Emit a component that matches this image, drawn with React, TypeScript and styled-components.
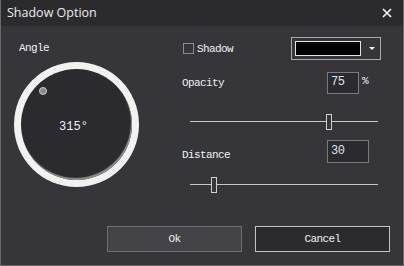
import React from 'react';
import styled, { createGlobalStyle } from 'styled-components';

const Global = createGlobalStyle`
    html, body {
        margin: 0;
        padding: 0;
        background: #36353a;
    }
    * { box-sizing: border-box; }
`

const mono = `"Liberation Mono", "DejaVu Sans Mono", monospace`

const Window = styled.div`
    width: 404px;
    height: 266px;
    border: 1px solid #6a6a6d;
    border-top: none;
    background: #36353a;
    display: flex;
    flex-direction: column;
    overflow: hidden;
`

const TitleBar = styled.div`
    height: 26px;
    background: #2b2b2e;
    display: flex;
    align-items: center;
    justify-content: space-between;
    padding: 0 11px 1px 6px;
    font-family: "Open Sans", "Noto Sans", sans-serif;
    font-size: 12.5px;
    color: #ececec;
`

const Close = styled.svg`
    width: 10px;
    height: 10px;
`

const Body = styled.div`
    flex: 1;
    display: flex;
    flex-direction: column;
    padding: 0 13px 13px 13px;
    font-family: ${mono};
    font-size: 11px;
    letter-spacing: -0.6px;
    color: #f2f2f2;
`

const Main = styled.div`
    display: flex;
    gap: 43px;
`

const AngleColumn = styled.div`
    display: flex;
    flex-direction: column;
    padding-top: 16px;
`

const Label = styled.span`
    line-height: 12px;
    padding-left: ${p => p.$indent ?? 0}px;
`

const Dial = styled.div`
    position: relative;
    margin-top: 8px;
    width: 125px;
    height: 125px;
    border-radius: 50%;
    background: #f1f1f1;
    padding: 7px;
`

const Face = styled.div`
    width: 100%;
    height: 100%;
    border-radius: 50%;
    background: #2b2a2e;
    box-shadow: inset -1px -2px 1px #909090;
    display: flex;
    align-items: center;
    justify-content: center;
    font-size: 12px;
    letter-spacing: 0;
    padding: 4px 6px 0 0;
`

const Knob = styled.div`
    position: absolute;
    width: 8px;
    height: 8px;
    margin: -4px 0 0 -4px;
    border-radius: 50%;
    background: #8a8a8a;
    border: 1px solid #c9c9c9;
`

const Options = styled.div`
    width: 199px;
    display: flex;
    flex-direction: column;
    padding-top: 11px;
`

const Row = styled.div`
    display: flex;
    align-items: center;
    height: ${p => p.$h}px;
    margin-top: ${p => p.$mt ?? 0}px;
`

const Check = styled.span`
    width: 11px;
    height: 11px;
    border: 1px solid #8c8c8c;
    margin: 0 3px 0 1px;
`

const ColorPick = styled.div`
    margin-left: auto;
    width: 90px;
    height: 23px;
    border: 1px solid #a9a9a9;
    display: flex;
    align-items: center;
    padding-left: 3px;
`

const Swatch = styled.div`
    width: 66px;
    height: 15px;
    background: #000;
    border: 1px solid #e2e2e2;
`

const Arrow = styled.div`
    margin-left: 8px;
    width: 0;
    height: 0;
    border-left: 3px solid transparent;
    border-right: 3px solid transparent;
    border-top: 3px solid #f2f2f2;
`

const FieldLabel = styled.span`
    width: 145px;
    padding-top: ${p => p.$drop ?? 0}px;
`

const Input = styled.div`
    width: ${p => p.$w}px;
    height: ${p => p.$h}px;
    border: 1px solid #7b7b7b;
    background: #2b2a2e;
    color: #dde6f7;
    font-size: 12px;
    letter-spacing: -0.4px;
    display: flex;
    align-items: center;
    padding: 0 0 2px 3px;
`

const Unit = styled.span`
    margin-left: 3px;
    align-self: flex-start;
    margin-top: 3px;
`

const Track = styled.div`
    position: relative;
    margin: 0 3px 0 8px;
    flex: 1;
    height: 16px;
    &::before {
        content: '';
        position: absolute;
        left: 0;
        right: 0;
        top: 7px;
        height: 1px;
        background: #c9c9c9;
    }
`

const Thumb = styled.div`
    position: absolute;
    top: 0;
    width: 6px;
    height: 16px;
    background: #36353a;
    border: 1px solid #cfcfcf;
`

const Footer = styled.div`
    margin-top: auto;
    display: flex;
    justify-content: flex-end;
    gap: 13px;
`

const Button = styled.div`
    width: 135px;
    height: 26px;
    display: flex;
    align-items: center;
    justify-content: center;
    background: ${p => p.$primary ? '#444448' : '#2b2a2e'};
    border: 1px solid ${p => p.$primary ? '#6f6f72' : '#c4c4c4'};
    font-size: 11px;
    padding-bottom: 1px;
`

// horizontal slider, thumb placed from value
const Slider = ({ value, max }: { value: number, max: number }) => (
    <Track>
        <Thumb style={{ left: `${value / max * 181}px` }} />
    </Track>
)

const ShadowOption = () => {
    const angle = 315
    const rad = (angle - 180) * Math.PI / 180
    const r = 48
    const c = 62.5

    return (
        <Window>
            <Global />
            <TitleBar>
                <span>Shadow Option</span>
                <Close viewBox="0 0 10 10">
                    <path d="M1 1L9 9M9 1L1 9" stroke="#f4f4f4" strokeWidth="1.7" />
                </Close>
            </TitleBar>
            <Body>
                <Main>
                    <AngleColumn>
                        <Label $indent={5}>Angle</Label>
                        <Dial>
                            <Face>{angle}°</Face>
                            <Knob style={{ left: c + r * Math.cos(rad), top: c - r * Math.sin(rad) }} />
                        </Dial>
                    </AngleColumn>
                    <Options>
                        <Row $h={23}>
                            <Check />
                            <span>Shadow</span>
                            <ColorPick>
                                <Swatch />
                                <Arrow />
                            </ColorPick>
                        </Row>
                        <Row $h={22} $mt={12}>
                            <FieldLabel>Opacity</FieldLabel>
                            <Input $w={32} $h={22}>75</Input>
                            <Unit>%</Unit>
                        </Row>
                        <Row $h={16} $mt={20}>
                            <Slider value={75} max={100} />
                        </Row>
                        <Row $h={23} $mt={10}>
                            <FieldLabel $drop={6}>Distance</FieldLabel>
                            <Input $w={42} $h={23}>30</Input>
                        </Row>
                        <Row $h={16} $mt={14}>
                            <Slider value={30} max={255} />
                        </Row>
                    </Options>
                </Main>
                <Footer>
                    <Button $primary>Ok</Button>
                    <Button>Cancel</Button>
                </Footer>
            </Body>
        </Window>
    )
}

export default ShadowOption;
